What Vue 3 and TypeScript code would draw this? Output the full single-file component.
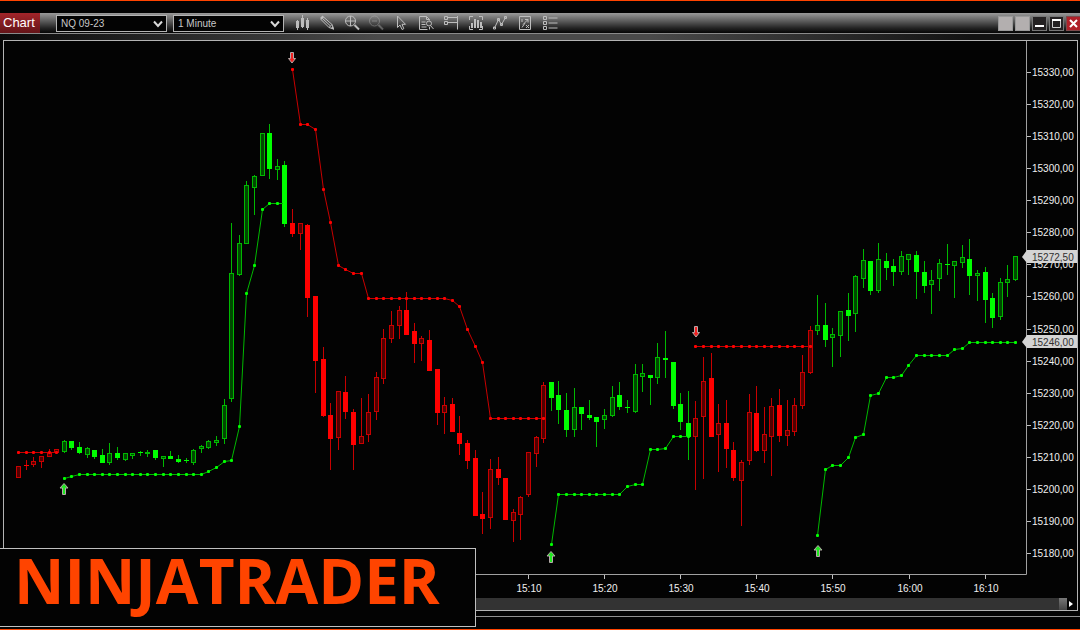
<script setup lang="ts">
import { ref } from 'vue'

type Tone = 'r' | 'g'
interface Candle { x: number; top: number; bottom: number; high: number; low: number; tone: Tone; solid: boolean }
interface Trail { tone: Tone; points: { x: number; y: number }[] }

const STEP = 7.61
const column = (i: number) => Math.floor(18.6 + STEP * i)

// One candle per entry: body top, body bottom, high, low. Upper case tone = filled body.
const raw = `
r466,478,466,478 r465,466,460,470 r461,465,457,467 r456,462,456,468 r452,457,449,457 r449,453,449,454
g441,452,440,453 G441,448,441,450 G447,453,442,454 g448,455,447,458 G450,457,450,459 G455,463,449,463
g453,463,443,465 G453,458,447,460 g453,460,453,461 g453,456,453,459 g452,453,451,456 g452,454,450,457
G450,458,450,460 g456,459,456,467 G456,459,451,459 G459,462,455,463 g460,461,458,463 g450,463,449,465
g446,449,445,453 g441,448,440,449 g440,443,436,446 g405,439,399,444 g273,399,223,402 g243,275,235,276
g185,244,181,244 g176,188,175,215 g133,176,133,176 G133,169,124,179 g166,170,159,180 G165,224,161,227
R223,234,209,237 r223,234,223,250 R225,298,224,317 R296,361,296,393 R359,416,347,417 R415,439,403,470
r391,438,391,450 R392,412,376,419 R412,445,409,470 r436,444,398,444 r412,435,394,442 r377,412,372,420
r338,379,329,384 r325,339,311,343 r310,326,306,339 R310,335,292,335 R331,344,323,363 r338,344,336,361
R340,371,330,371 R369,413,369,425 r405,413,397,434 R404,432,398,432 R433,444,416,455 R443,461,440,469
R458,516,450,516 R514,519,492,534 r469,518,459,529 R469,478,457,485 R478,520,478,520 r512,521,509,542
r497,515,496,540 r452,495,452,497 r437,454,436,467 r385,439,382,443 G382,398,382,411 G395,410,381,424
G410,430,393,437 g407,430,388,437 G407,414,407,430 G415,418,400,420 G417,422,417,447 g415,420,409,429
g397,416,386,417 G395,407,382,410 g407,408,400,413 g374,412,364,413 g373,377,364,392 G375,378,375,405
g357,378,343,384 G358,360,331,378 G362,406,362,409 G404,422,393,430 G423,437,391,460 r418,437,401,490
r381,417,357,479 R378,437,353,437 r423,435,404,472 R423,449,400,468 R450,478,442,481 r462,481,460,526
r412,461,394,465 R413,451,386,452 r434,451,407,463 r406,437,398,476 R405,436,389,442 r430,436,400,446
r405,432,398,436 r372,406,355,409 r330,373,326,374 g325,331,295,335 G325,340,303,347 g334,338,328,367
g311,336,311,357 G310,316,293,341 g276,314,275,332 g260,279,249,288 G261,291,261,295 g259,291,243,293
G261,268,253,280 G266,272,259,286 g256,272,251,275 g254,260,254,275 G255,272,251,299 G272,286,261,293
g280,285,270,314 g263,279,259,291 g264,265,244,275 g261,266,261,298 g257,263,245,268 G259,276,239,295
g273,276,270,301 G272,300,267,323 G298,318,293,328 g282,317,278,320 g279,283,265,297 g256,280,256,281`

const candles: Candle[] = raw.trim().split(/\s+/).map((entry, i) => {
  const [top, bottom, high, low] = entry.slice(1).split(',').map(Number)
  const tone = entry[0].toLowerCase() as Tone
  return { x: column(i), top, bottom, high, low, tone, solid: entry[0] !== tone }
})

const repeat = (value: number, count: number): number[] => Array(count).fill(value)
const trail = (tone: Tone, start: number, levels: number[]): Trail => ({
  tone,
  points: levels.map((y, k) => ({ x: column(start + k), y })),
})
const trails: Trail[] = [
  trail('r', 0, repeat(452, 6)),
  trail('g', 6, [478, 476, ...repeat(474, 17), 471, 467, 461, 460, 426, 293, 265, 209, 203, 203, 203]),
  trail('r', 36, [69, 124, 124, 129, 189, 222, 265, 269, 273, 273, ...repeat(298, 11), 300, 306, 329, 346, 362, ...repeat(418, 8)]),
  trail('g', 70, [544, ...repeat(494, 9), 486, 484, 484, 449, 449, 448, 436, 436, 436]),
  trail('r', 89, repeat(346, 16)),
  trail('g', 105, [535, 469, 465, 465, 457, 437, 434, 395, 393, 377, 377, 375, 365, ...repeat(355, 5), 349, 348, ...repeat(342, 7)]),
]
const asPoints = (t: Trail) => t.points.map(p => `${p.x + 0.5},${p.y + 0.5}`).join(' ')

const signals = [
  { x: 292, y: 52, down: true },
  { x: 696, y: 326, down: true },
  { x: 64, y: 483, down: false },
  { x: 551, y: 551, down: false },
  { x: 818, y: 545, down: false },
]

const prices = Array.from({ length: 16 }, (_, i) => ({
  label: `${15330 - i * 10},00`,
  y: Math.round(72 + i * 32.07),
}))
const times = ['15:10', '15:20', '15:30', '15:40', '15:50', '16:00', '16:10'].map((label, i) => ({
  label,
  x: Math.round(528 + i * 76.1),
}))
const tags = [{ label: '15272,50', y: 257 }, { label: '15246,00', y: 342 }]

const instrument = ref('NQ 09-23')
const interval = ref('1 Minute')
</script>

<template>
  <main class="window">
    <header class="toolbar">
      <h1 class="title">Chart</h1>
      <label class="picker">
        <select v-model="instrument" aria-label="Instrument"><option>NQ 09-23</option></select>
        <svg class="chevron" viewBox="0 0 10 8"><path d="M1 1.5 L5 6 L9 1.5" /></svg>
      </label>
      <label class="picker">
        <select v-model="interval" aria-label="Interval"><option>1 Minute</option></select>
        <svg class="chevron" viewBox="0 0 10 8"><path d="M1 1.5 L5 6 L9 1.5" /></svg>
      </label>

      <nav class="tools" aria-label="Chart tools">
        <button aria-label="Chart style">
          <svg viewBox="0 0 16 16"><path class="fill" d="M2 6h3v7H2zM7 3h3v9H7zM12 5h3v8h-3z" /><path d="M3.500 5v10M8.500 0v13M13.500 3v12" /></svg>
        </button>
        <button aria-label="Drawing tools">
          <svg viewBox="0 0 16 16"><path d="M2 4.500 4.500 2 13 9.500 14.500 14 10 12.500ZM3.500 3.500 11.500 11M10 12.500 13 9.500" /><path class="fill" d="M1 3 3.500 .500 5 2 2.500 4.500ZM12 13l2-2 1 4z" /></svg>
        </button>
        <button aria-label="Zoom in">
          <svg viewBox="0 0 16 16"><circle cx="6.500" cy="6" r="5" /><path d="M6.500 1v10M1.500 6h10" /><path class="thick" d="m10.500 10 4.500 4.500" /></svg>
        </button>
        <button class="off" aria-label="Zoom out" disabled>
          <svg viewBox="0 0 16 16"><circle cx="6.500" cy="6" r="5" /><path d="M4 6h5" /><path class="thick" d="m10.500 10 4.500 4.500" /></svg>
        </button>
        <button aria-label="Cursor">
          <svg viewBox="0 0 16 16"><path d="M4.500 1v11.500l2.500-2.500 2 4.500 1.800-.8-1.800-4.400h3.500z" /></svg>
        </button>
        <button aria-label="Data box">
          <svg viewBox="0 0 16 16"><path d="M9.500 14.500h-8v-13h7l3 3v1M8.500 1.500v3h3M3.500 7h4M3.500 9.500h4M3.500 12h5" /><circle cx="11" cy="8.500" r="2.500" /><path d="m12.500 10.500 3 3.500M11.500 12v2.500" /></svg>
        </button>
        <button aria-label="Chart trader">
          <svg viewBox="0 0 16 16"><path d="M1.500 1.500h3v3h-3zM1.500 6.500h3v3h-3zM4.500 2.500h10M4.500 7.500h10M14.500 1v13.500" /></svg>
        </button>
        <button aria-label="Data series">
          <svg viewBox="0 0 16 16"><path d="M1.500 5V1.500H5M11 1.500h3.500V5M14.500 11v3.500H11M5 14.500H1.500V11" /><path class="fill" d="M3 8h2v5H3zM6 4h2v9H6zM9 5h2v8H9zM12 7h2v6h-2z" /></svg>
        </button>
        <button aria-label="Indicators">
          <svg viewBox="0 0 16 16"><path d="M2.500 13 6.500 4.500 9.500 9.500 13.500 2.500" /><path d="M1.500 12h2v2h-2zM5.500 3.500h2v2h-2zM8.500 8.500h2v2h-2zM12.500 1.500h2v2h-2z" /></svg>
        </button>
        <button aria-label="Strategies">
          <svg viewBox="0 0 16 16"><path d="M2.500 1.500h11v13h-11z" /><path d="M5 12.500 8 8M5 4v3M8 4.500h3v3M9 10l3 3M12 10l-3 3M6 9.500 11 4.500" /></svg>
        </button>
        <button aria-label="Properties">
          <svg viewBox="0 0 16 16"><path d="M1.500 1.500h3v3h-3zM1.500 6.500h3v3h-3zM1.500 11.500h3v3h-3zM6.500 3h9M6.500 8h9M6.500 13h9" /></svg>
        </button>
      </nav>

      <div class="controls">
        <button class="blank" aria-label="Link instrument"></button>
        <button class="blank" aria-label="Link interval"></button>
        <button aria-label="Minimize"><svg viewBox="0 0 13 13"><path d="M2 9h9" /></svg></button>
        <button aria-label="Maximize"><svg viewBox="0 0 13 13"><path class="thin" d="M2.500 3.500h8v7h-8z" /><path d="M2 3h9" /></svg></button>
        <button class="close" aria-label="Close"><svg viewBox="0 0 13 13"><path d="m3 3 7 7M10 3l-7 7" /></svg></button>
      </div>
    </header>
    <div class="strip"></div>

    <section class="frame">
      <svg class="chart" viewBox="4 41 1073 557" role="img" aria-label="NQ 09-23 one minute candles">
        <g shape-rendering="crispEdges">
          <g v-for="(c, i) in candles" :key="i" :class="['candle', c.tone]">
            <rect class="wick" :x="c.x" :y="c.high" width="1" :height="c.low - c.high" />
            <rect v-if="c.solid || c.bottom - c.top < 2" class="body" :x="c.x - 2" :y="c.top" width="5" :height="c.bottom - c.top" />
            <rect v-else class="hollow" :x="c.x - 1.5" :y="c.top + 0.5" width="4" :height="c.bottom - c.top - 1" />
          </g>
        </g>
        <g v-for="(t, i) in trails" :key="i" :class="['trail', t.tone]">
          <polyline :points="asPoints(t)" />
          <rect v-for="(p, k) in t.points" :key="k" :x="p.x - 1" :y="p.y - 1" width="3" height="3" rx="1" />
        </g>
        <g v-for="(s, i) in signals" :key="i" :transform="`translate(${s.x} ${s.y})`">
          <path v-if="s.down" class="signal r" d="M-1.500 .500h3v6h2L0 11-3.500 6.500h2z" />
          <path v-else class="signal g" d="M-1.500 11.500h3V5h2.500L0 .500-4 5h2.500z" />
        </g>
        <path class="axis" d="M1026.500 41V574.500M4 574.500H1026.500" />
        <g v-for="p in prices" :key="p.label">
          <path class="tick" :d="`M1027 ${p.y + 0.5}h4`" />
          <text class="label" x="1032" :y="p.y + 4">{{ p.label }}</text>
        </g>
        <g v-for="t in times" :key="t.label">
          <path class="tick" :d="`M${t.x + 0.5} 575v4`" />
          <text class="label middle" :x="t.x + 1" y="592">{{ t.label }}</text>
        </g>
        <g v-for="t in tags" :key="t.label">
          <path class="tag" :d="`M1022 ${t.y}L1027 ${t.y - 7}H1077V${t.y + 6}H1027Z`" />
          <text class="label dark" x="1032" :y="t.y + 4">{{ t.label }}</text>
        </g>
      </svg>
      <div class="scroll">
        <div class="track"><div class="thumb"></div></div>
        <button class="next" aria-label="Scroll right"><svg viewBox="0 0 8 10"><path d="M2 2v6l4-3z" /></svg></button>
      </div>
    </section>
    <div class="rule"></div>

    <aside class="brand">NINJATRADER</aside>
  </main>
</template>

<style>
html,
body {
  background: #030303;
}
</style>

<style scoped>
.window {
  position: relative;
  box-sizing: border-box;
  min-height: 100vh;
  display: flex;
  flex-direction: column;
  border-top: 1px solid #ff4400;
  border-bottom: 1px solid #ff4400;
  padding-top: 12px;
  background: #030303;
  font-family: "Liberation Sans", Arial, sans-serif;
  overflow: hidden;
}
button {
  padding: 0;
  border: 0;
  background: none;
}
.toolbar {
  display: flex;
  align-items: center;
  height: 20px;
  border-bottom: 1px solid #8a8a8a;
  background: linear-gradient(#9a9a9a, #5c5c5c 40%, #242424 75%, #050505);
}
.title {
  margin: 0 16px 0 0;
  width: 40px;
  box-sizing: border-box;
  padding-left: 3px;
  font-size: 13px;
  font-weight: 400;
  line-height: 20px;
  color: #fff;
  background: linear-gradient(#a3252a, #641418);
}
.picker {
  position: relative;
  width: 111px;
  height: 17px;
  margin-right: 6px;
}
.picker select {
  appearance: none;
  display: block;
  box-sizing: border-box;
  width: 100%;
  height: 100%;
  padding: 0 4px;
  border: 1px solid #b4b4b4;
  border-radius: 0;
  background: #030303;
  color: #c8c8c8;
  font: 10px "Liberation Sans", Arial, sans-serif;
}
.chevron {
  position: absolute;
  right: 4px;
  top: 5px;
  width: 10px;
  height: 8px;
  pointer-events: none;
}
.chevron path {
  fill: none;
  stroke: #d8d8d8;
  stroke-width: 2;
}
.tools {
  display: flex;
  justify-content: space-between;
  width: 264px;
  margin-left: 4px;
}
.tools button,
.tools svg {
  display: block;
  width: 16px;
  height: 16px;
}
.tools path,
.tools circle {
  fill: none;
  stroke: #bdbdbd;
  stroke-width: 1;
}
.tools .fill {
  fill: #bdbdbd;
  stroke: none;
}
.tools .thick {
  stroke-width: 2;
}
.tools .off {
  opacity: 0.4;
}
.controls {
  display: flex;
  gap: 2px;
  margin-left: auto;
  margin-right: -1px;
}
.controls button {
  box-sizing: border-box;
  width: 15px;
  height: 15px;
  border: 1px solid #777;
  background: #242122;
}
.controls .blank {
  border-color: #999;
  background: #b3afaf;
}
.controls .close {
  border-color: #7d4a4c;
  background: #b02028;
}
.controls svg {
  display: block;
  width: 13px;
  height: 13px;
}
.controls path {
  fill: none;
  stroke: #fff;
  stroke-width: 2;
}
.controls .thin {
  stroke: #d0d0d0;
  stroke-width: 1;
}
.strip {
  height: 6px;
  background: linear-gradient(90deg, #0a0a0a, #4a4a4a 35%, #4a4a4a 60%, #121212 90%);
}
.frame {
  margin: 0 2px 0 3px;
  border: 1px solid #b4b4b4;
}
.chart {
  display: block;
  width: 100%;
}
.r {
  --bright: #ff0000;
  --mid: #c80000;
  --deep: #520000;
}
.g {
  --bright: #00ff00;
  --mid: #00b800;
  --deep: #004800;
}
.wick {
  fill: var(--mid);
}
.body {
  fill: var(--bright);
}
.hollow {
  fill: var(--deep);
  stroke: var(--mid);
}
.trail polyline {
  fill: none;
  stroke: var(--mid);
}
.trail rect {
  fill: var(--bright);
}
.signal {
  stroke: #b4a8a8;
  stroke-width: 1;
}
.signal.r {
  fill: #f02020;
}
.signal.g {
  fill: #20e820;
}
.axis {
  fill: none;
  stroke: #a0a0a0;
}
.tick {
  stroke: #c0c0c0;
}
.label {
  font-size: 10px;
  fill: #f0f0f0;
}
.middle {
  text-anchor: middle;
}
.tag {
  fill: #d4d4d4;
}
.dark {
  fill: #303030;
}
.scroll {
  display: flex;
  height: 12px;
}
.track {
  flex: 1;
  display: flex;
  justify-content: flex-end;
  background: #333;
}
.thumb {
  width: 8px;
  background: linear-gradient(#777, #444);
}
.next {
  width: 10px;
}
.next svg {
  display: block;
  width: 8px;
  height: 12px;
}
.next path {
  fill: #fff;
}
.rule {
  margin-top: 5px;
  border-top: 1px solid #909090;
}
.brand {
  position: absolute;
  left: 0;
  bottom: 2px;
  box-sizing: border-box;
  height: 79px;
  width: 476px;
  padding-left: 14px;
  border: 1px solid #c0c0c0;
  border-left: 0;
  background: #030303;
  color: #ff4400;
  font: 700 62px/62px "Open Sans", "Noto Sans", sans-serif;
}
</style>
